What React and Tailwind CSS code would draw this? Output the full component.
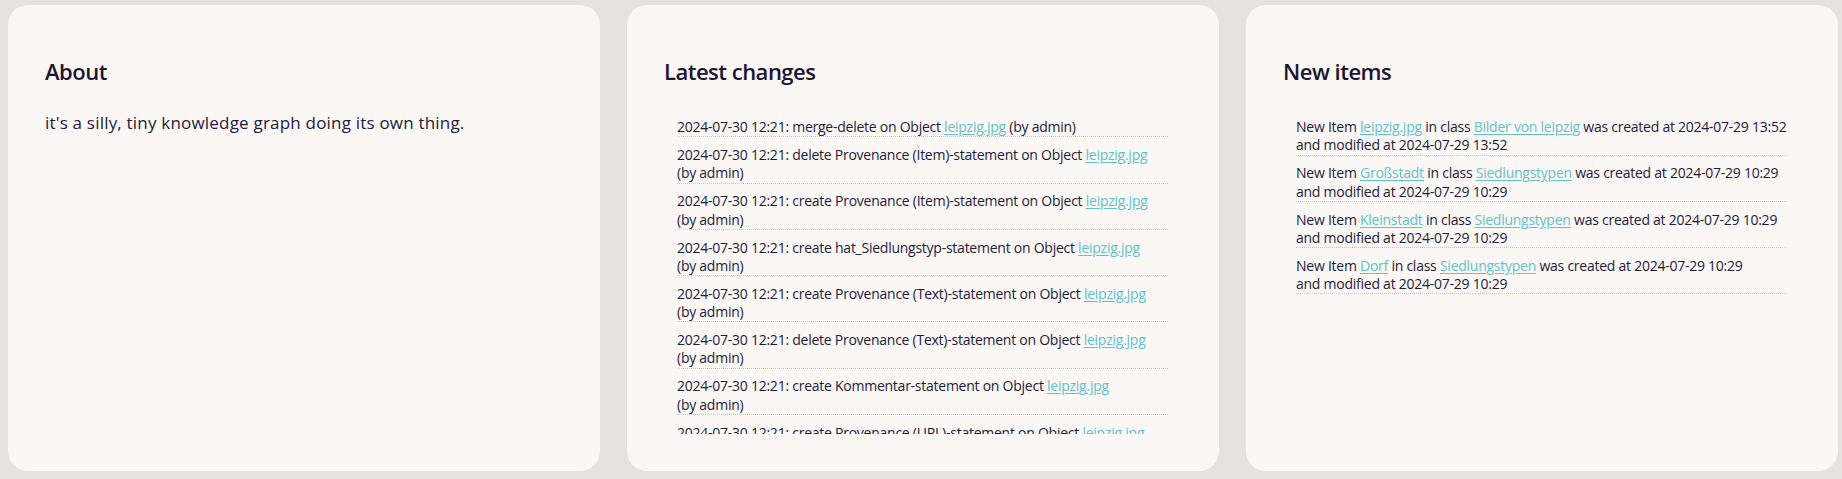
import React from "react";

const changes = [
  { action: "merge-delete", br: false },
  { action: "delete Provenance (Item)-statement", br: true },
  { action: "create Provenance (Item)-statement", br: true },
  { action: "create hat_Siedlungstyp-statement", br: true },
  { action: "create Provenance (Text)-statement", br: true },
  { action: "delete Provenance (Text)-statement", br: true },
  { action: "create Kommentar-statement", br: true },
  { action: "create Provenance (URL)-statement", br: true },
];

const newItems = [
  { item: "leipzig.jpg", cls: "Bilder von leipzig", at: "2024-07-29 13:52" },
  { item: "Großstadt", cls: "Siedlungstypen", at: "2024-07-29 10:29" },
  { item: "Kleinstadt", cls: "Siedlungstypen", at: "2024-07-29 10:29" },
  { item: "Dorf", cls: "Siedlungstypen", at: "2024-07-29 10:29" },
];

function Link({ children }) {
  return (
    <a href="#" className="text-[#5fc3cb] underline decoration-[#5fc3cb] underline-offset-2">
      {children}
    </a>
  );
}

function Card({ title, children }) {
  return (
    <section className="h-[466px] rounded-[20px] bg-[#faf7f5] p-[37px] flex flex-col min-w-0">
      <h2 className="mt-[16px] text-[22px] leading-[26px] font-semibold tracking-[-0.5px] text-[#1c1433]">
        {title}
      </h2>
      {children}
    </section>
  );
}

export default function App() {
  return (
    <div
      className="min-h-screen bg-[#e6e2df] pt-[5px] pl-[8px] pr-[4px] grid grid-cols-3 gap-[27px] items-start text-[#241b3a]"
      style={{ fontFamily: '"Open Sans", "Noto Sans", sans-serif' }}
    >
      <Card title="About">
        <p className="mt-[27px] text-[17px] leading-[24px] tracking-[0.2px]">
          it's a silly, tiny knowledge graph doing its own thing.
        </p>
      </Card>

      <Card title="Latest changes">
        <ul className="mt-[34px] ml-[13px] mr-[14px] flex-1 overflow-hidden flex flex-col gap-[8.7px] text-[14px] leading-[18.3px] tracking-[-0.25px]">
          {changes.map((c, i) => (
            <li key={i} className="border-b border-dotted border-[#c9c6cc]">
              2024-07-30 12:21: {c.action} on Object <Link>leipzig.jpg</Link>
              {c.br ? <br /> : " "}
              (by admin)
            </li>
          ))}
        </ul>
      </Card>

      <Card title="New items">
        <ul className="mt-[34px] ml-[13px] mr-[14px] flex-1 overflow-hidden flex flex-col gap-[8.7px] text-[14px] leading-[18.3px] tracking-[-0.25px]">
          {newItems.map((n, i) => (
            <li key={i} className="border-b border-dotted border-[#c9c6cc]">
              <span className="whitespace-nowrap">
                New Item <Link>{n.item}</Link> in class <Link>{n.cls}</Link> was created at {n.at}
              </span>
              <br />
              and modified at {n.at}
            </li>
          ))}
        </ul>
      </Card>
    </div>
  );
}
